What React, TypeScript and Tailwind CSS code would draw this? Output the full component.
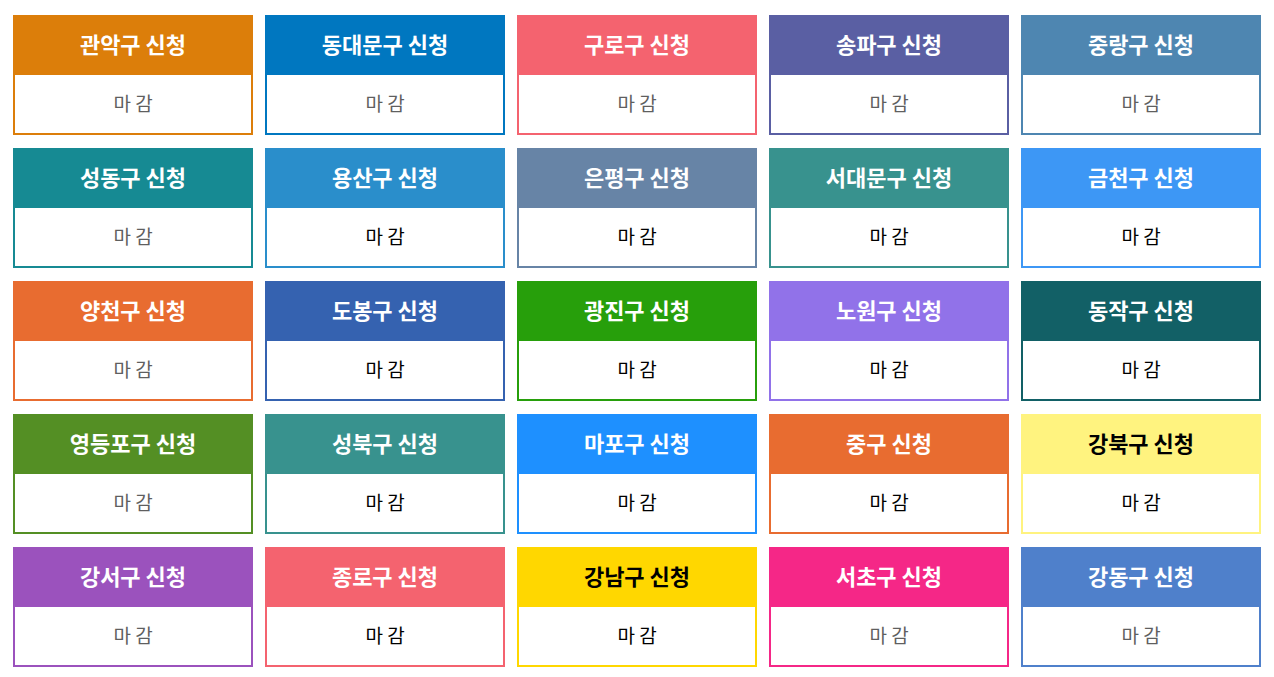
import React from "react";

type Item = { name: string; bg: string; border: string; dark?: boolean; closed: "gray" | "black" };

const items: Item[] = [
  { name: "관악구", bg: "bg-[#dc7e0a]", border: "border-[#dc7e0a]", closed: "gray" },
  { name: "동대문구", bg: "bg-[#0077c0]", border: "border-[#0077c0]", closed: "gray" },
  { name: "구로구", bg: "bg-[#f4636f]", border: "border-[#f4636f]", closed: "gray" },
  { name: "송파구", bg: "bg-[#5a5fa3]", border: "border-[#5a5fa3]", closed: "gray" },
  { name: "중랑구", bg: "bg-[#4e86b1]", border: "border-[#4e86b1]", closed: "gray" },
  { name: "성동구", bg: "bg-[#168a93]", border: "border-[#168a93]", closed: "gray" },
  { name: "용산구", bg: "bg-[#2a8ecb]", border: "border-[#2a8ecb]", closed: "black" },
  { name: "은평구", bg: "bg-[#6784a6]", border: "border-[#6784a6]", closed: "black" },
  { name: "서대문구", bg: "bg-[#38928e]", border: "border-[#38928e]", closed: "black" },
  { name: "금천구", bg: "bg-[#3d97f5]", border: "border-[#3d97f5]", closed: "black" },
  { name: "양천구", bg: "bg-[#e86c30]", border: "border-[#e86c30]", closed: "gray" },
  { name: "도봉구", bg: "bg-[#3562b0]", border: "border-[#3562b0]", closed: "black" },
  { name: "광진구", bg: "bg-[#279f0b]", border: "border-[#279f0b]", closed: "black" },
  { name: "노원구", bg: "bg-[#9172e9]", border: "border-[#9172e9]", closed: "black" },
  { name: "동작구", bg: "bg-[#126066]", border: "border-[#126066]", closed: "black" },
  { name: "영등포구", bg: "bg-[#548f24]", border: "border-[#548f24]", closed: "gray" },
  { name: "성북구", bg: "bg-[#38928e]", border: "border-[#38928e]", closed: "black" },
  { name: "마포구", bg: "bg-[#1e90ff]", border: "border-[#1e90ff]", closed: "black" },
  { name: "중구", bg: "bg-[#e86c30]", border: "border-[#e86c30]", closed: "black" },
  { name: "강북구", bg: "bg-[#fff37f]", border: "border-[#fff37f]", dark: true, closed: "black" },
  { name: "강서구", bg: "bg-[#9b52bd]", border: "border-[#9b52bd]", closed: "gray" },
  { name: "종로구", bg: "bg-[#f4636f]", border: "border-[#f4636f]", closed: "black" },
  { name: "강남구", bg: "bg-[#ffd700]", border: "border-[#ffd700]", dark: true, closed: "black" },
  { name: "서초구", bg: "bg-[#f52787]", border: "border-[#f52787]", closed: "gray" },
  { name: "강동구", bg: "bg-[#4f80cb]", border: "border-[#4f80cb]", closed: "gray" },
];

export default function App() {
  return (
    <div
      className="min-h-[677px] w-full bg-white pl-[13px] pt-[15px]"
      style={{ fontFamily: '"Noto Sans CJK KR", "Noto Sans", sans-serif' }}
    >
      <div className="grid grid-cols-[repeat(5,240px)] gap-x-[12px] gap-y-[13px] items-start">
        {items.map((it) => (
          <div key={it.name} className={`flex flex-col border-2 ${it.border} bg-white`}>
            <div
              className={`${it.bg} -mx-[2px] -mt-[2px] flex h-[60px] items-center justify-center pb-[3px] text-[22px] font-bold ${
                it.dark ? "text-black" : "text-white"
              }`}
            >
              {it.name} 신청
            </div>
            <div
              className={`flex h-[58px] items-center justify-center pb-[2px] text-[19px] ${
                it.closed === "gray" ? "text-[#5f5f5f]" : "text-black"
              }`}
            >
              마 감
            </div>
          </div>
        ))}
      </div>
    </div>
  );
}
